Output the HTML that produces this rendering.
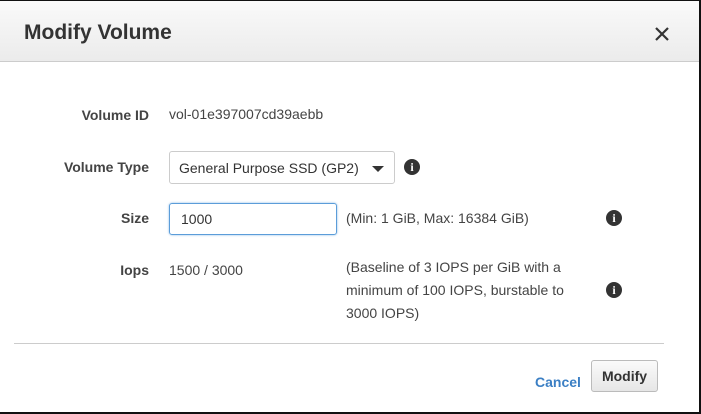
<!DOCTYPE html>
<html><head><style>
*{margin:0;padding:0;box-sizing:border-box}
body{width:701px;height:414px;background:#fff;font-family:"Liberation Sans",Arial,sans-serif;position:relative;overflow:hidden;color:#333}
.frame{position:absolute;left:0;top:0;width:701px;height:414px;border-top:1px solid #111;border-right:2px solid #111;border-bottom:2px solid #111}
.hdr{position:absolute;left:0;top:1px;width:699px;height:61px;background:linear-gradient(#fafafa,#ebebeb);border-bottom:1px solid #ccc}
.hdr h1{position:absolute;left:24px;top:20px;font-size:21px;font-weight:bold;color:#333}
.x{position:absolute;left:655px;top:26px}
.lbl{position:absolute;font-size:14px;font-weight:bold;color:#444;text-align:right;width:120px}
.t{position:absolute;font-size:14px;color:#444;line-height:19px}
.sel{position:absolute;left:169px;top:151px;width:226px;height:33px;border:1px solid #ccc;border-radius:3px;background:#fff;font-size:14px;color:#333;padding:8px 0 0 9px}
.sel .ar{position:absolute;right:10px;top:14px;width:0;height:0;border-left:6px solid transparent;border-right:6px solid transparent;border-top:6px solid #333}
.inp{position:absolute;left:169px;top:203px;width:168px;height:32px;border:1px solid #5b9dd9;border-radius:3px;box-shadow:0 0 2px #8ab8e6;font-size:14px;color:#333;padding:7px 0 0 11px}
.info{position:absolute;width:16px;height:16px;border-radius:50%;background:#333;color:#fff;font:bold 12px/16px "Liberation Serif",serif;text-align:center}
.sep{position:absolute;left:14px;top:343px;width:650px;height:1px;background:#ccc}
.cancel{position:absolute;left:535px;top:374px;font-size:14px;font-weight:bold;color:#3b7fc4}
.btn{position:absolute;left:591px;top:360px;width:67px;height:32px;border:1px solid #bbb;border-radius:3px;background:linear-gradient(#fafafa,#e6e6e6);font-size:14px;font-weight:bold;color:#333;text-align:center;line-height:30px}
</style></head><body>
<div class="hdr"><h1>Modify Volume</h1>
<svg class="x" width="14" height="14" viewBox="0 0 14 14"><path d="M1 1L13 13M13 1L1 13" stroke="#333" stroke-width="2.2"/></svg></div>
<div class="lbl" style="left:29px;top:107px">Volume ID</div>
<div class="t" style="left:169px;top:105px">vol-01e397007cd39aebb</div>
<div class="lbl" style="left:29px;top:159px">Volume Type</div>
<div class="sel">General Purpose SSD (GP2)<span class="ar"></span></div>
<div class="info" style="left:404px;top:159px">i</div>
<div class="lbl" style="left:29px;top:210px">Size</div>
<div class="inp">1000</div>
<div class="t" style="left:346px;top:209px">(Min: 1 GiB, Max: 16384 GiB)</div>
<div class="info" style="left:606px;top:210px">i</div>
<div class="lbl" style="left:29px;top:262px">Iops</div>
<div class="t" style="left:169px;top:261px">1500 / 3000</div>
<div class="t" style="left:346px;top:256px;width:225px;line-height:23px">(Baseline of 3 IOPS per GiB with a minimum of 100 IOPS, burstable to 3000 IOPS)</div>
<div class="info" style="left:606px;top:282px">i</div>
<div class="sep"></div>
<div class="cancel">Cancel</div>
<div class="btn">Modify</div>
<div class="frame"></div>
</body></html>
